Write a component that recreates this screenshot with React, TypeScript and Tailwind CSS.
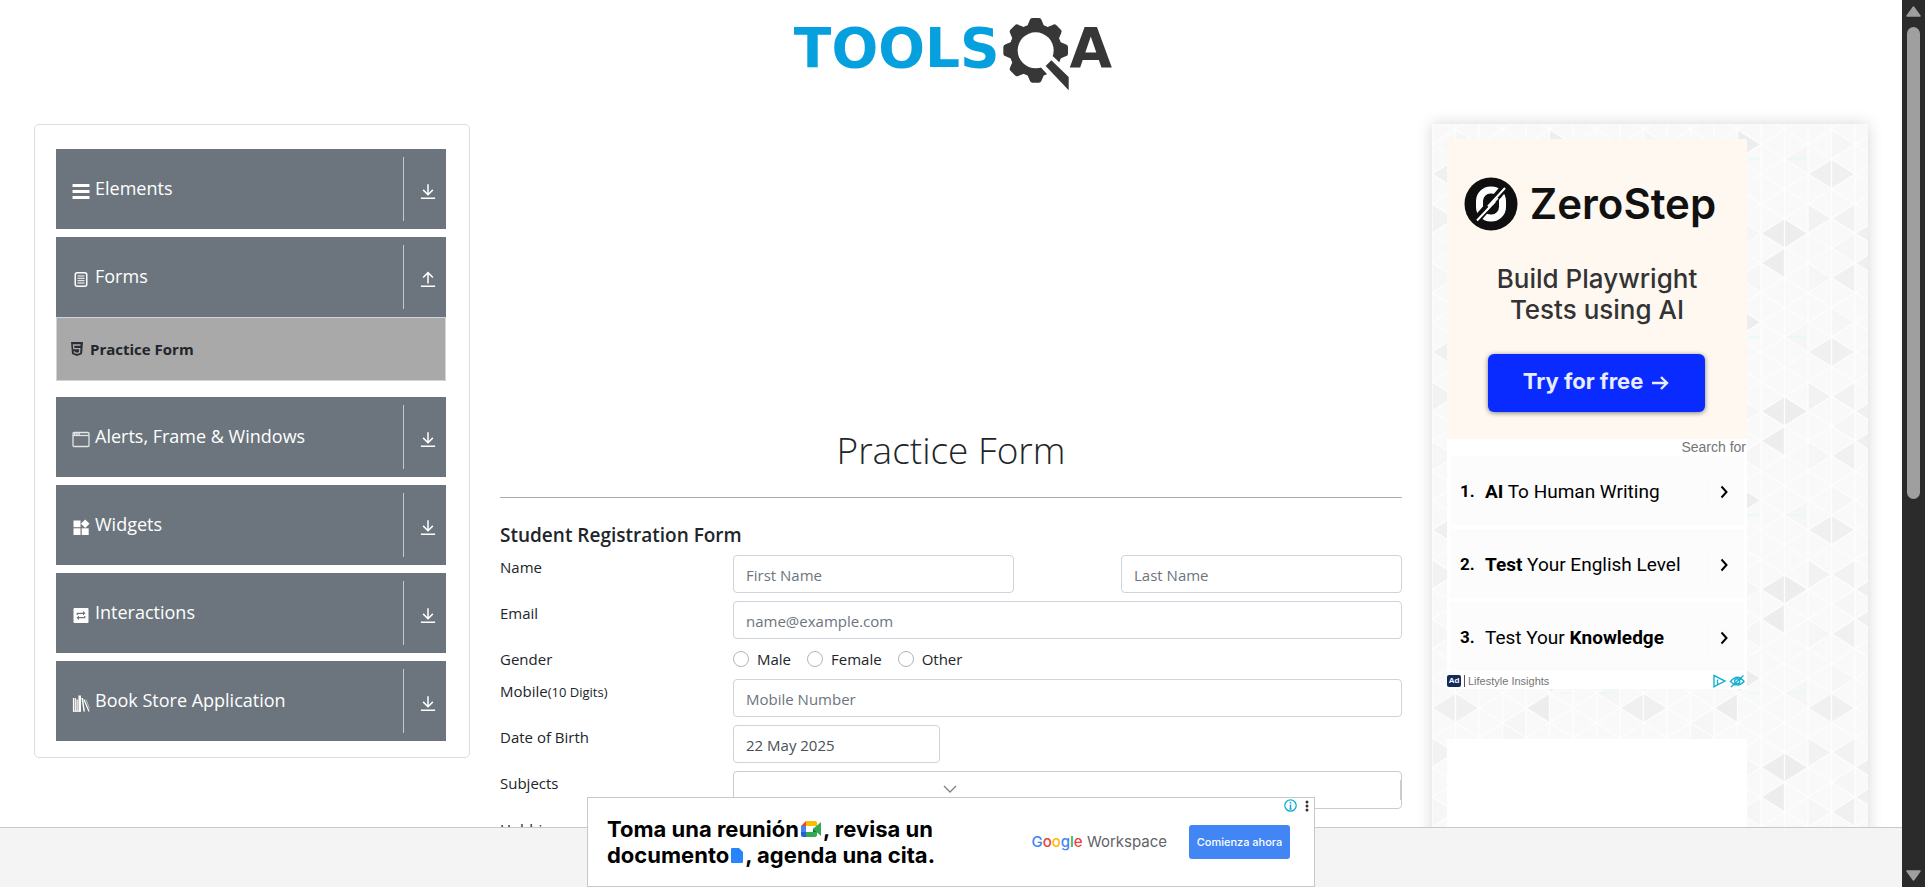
import type { ReactNode } from "react";

const DOWN = "M12 3v13M5.500 10.500L12 17l6.500-6.500M2.500 21.500h19";
const UP = "M12 18V4M5.500 10L12 3.500l6.500 6.500M2.500 21.500h19";

function ElementsIcon() {
  return (
    <svg viewBox="0 0 18 18" className="h-[18px] w-[18px]" fill="white" aria-hidden="true">
      <rect x="0.500" y="2" width="17" height="3" rx="0.500" />
      <rect x="0.500" y="8" width="17" height="3" rx="0.500" />
      <rect x="0.500" y="14" width="17" height="3" rx="0.500" />
    </svg>
  );
}

function FormsIcon() {
  return (
    <svg viewBox="0 0 18 18" className="h-[18px] w-[18px]" fill="none" stroke="white" aria-hidden="true">
      <rect x="3.250" y="2.700" width="11.500" height="13.600" rx="2" strokeWidth="1.500" />
      <path d="M5.500 6h7M5.500 8.300h7M5.500 10.700h7M5.500 13h7" strokeWidth="1" />
    </svg>
  );
}

function WindowIcon() {
  return (
    <svg viewBox="0 0 18 18" className="h-[18px] w-[18px]" fill="none" stroke="#e2e4e6" aria-hidden="true">
      <rect x="1" y="2.500" width="16" height="14" rx="1" strokeWidth="1.300" />
      <path d="M1 5.500h16" strokeWidth="1.200" />
      <path d="M2 4h6" stroke="white" strokeWidth="1.500" strokeDasharray="1.500 0.700" />
    </svg>
  );
}

function WidgetsIcon() {
  return (
    <svg viewBox="0 0 18 18" className="h-[18px] w-[18px]" fill="white" aria-hidden="true">
      <rect x="1.500" y="2.500" width="7" height="6.700" />
      <rect x="1.500" y="10.300" width="7" height="6.700" />
      <rect x="9.700" y="10.300" width="7" height="6.700" />
      <path d="M13.200 1.500l4.300 4.300-4.300 4.300-4.300-4.300z" />
    </svg>
  );
}

function InteractionsIcon() {
  return (
    <svg viewBox="0 0 18 18" className="h-[18px] w-[18px]" fill="none" aria-hidden="true">
      <rect x="1.500" y="2" width="15" height="15" rx="1" fill="white" />
      <path d="M5.300 9V7.300h6.500M12.700 10v1.700H6.200" stroke="#6c757d" strokeWidth="1.300" />
      <path d="M11 5l2.500 2.300L11 9.600zM7 9.400l-2.500 2.300L7 14z" fill="#6c757d" />
    </svg>
  );
}

function BooksIcon() {
  return (
    <svg viewBox="0 0 18 18" className="h-[18px] w-[18px]" fill="none" stroke="white" aria-hidden="true">
      <path d="M1.500 4v13.500M3.300 4v13.500" strokeWidth="1.200" />
      <path d="M5.200 5.500v12" strokeWidth="1.800" stroke="#d9dbdd" />
      <path d="M7.700 1.500v16" strokeWidth="2.500" />
      <path d="M10.200 4l2 13.500" strokeWidth="1.500" />
      <path d="M12 5.500l5 12" strokeWidth="1.200" />
      <path d="M14 5.500l3.500 9" strokeWidth="0.500" />
      <path d="M1 17.200h8" strokeWidth="1" />
    </svg>
  );
}

function Group({ icon, label, open = false }: { icon: ReactNode; label: string; open?: boolean }) {
  return (
    <button
      type="button"
      aria-expanded={open}
      className="flex h-20 w-full items-center bg-[#6c757d] py-2 pl-4 text-left text-white"
    >
      <span className="flex flex-1 items-center gap-[5px]">
        <span className="pt-1">{icon}</span>
        <span className="pb-[2px] text-lg leading-7">{label}</span>
      </span>
      <span className="flex h-16 w-[43px] items-center justify-center border-l border-[#c4c8cb] pl-[6px] pt-1">
        <svg viewBox="0 0 24 24" className="h-[18px] w-[18px]" fill="none" stroke="white" strokeWidth="2" aria-hidden="true">
          <path d={open ? UP : DOWN} />
        </svg>
      </span>
    </button>
  );
}

function Sidebar() {
  return (
    <nav className="rounded-[5px] border border-[#dcdddf] pb-4 pl-[21px] pr-[23px] pt-6">
      <div className="flex flex-col gap-2">
        <Group icon={<ElementsIcon />} label="Elements" />
        <div className="mb-2">
          <Group icon={<FormsIcon />} label="Forms" open />
          <a
            href="#practice-form"
            className="flex h-16 items-center gap-[5px] border border-[#ced4da] bg-[#a9a9a9] pl-3 text-[15px] font-bold text-[#212529]"
          >
            <svg viewBox="0 0 16 16" className="h-4 w-4" aria-hidden="true">
              <path d="M2 1h12l-1 12-5 2-5-2z" fill="#2b2e33" />
              <path d="M11.500 4h-7l.3 3.700h6l-.3 3.800-2.500.9-2.500-.9-.1-1.300" fill="none" stroke="#a9a9a9" strokeWidth="1.300" />
            </svg>
            Practice Form
          </a>
        </div>
        <Group icon={<WindowIcon />} label="Alerts, Frame &amp; Windows" />
        <Group icon={<WidgetsIcon />} label="Widgets" />
        <Group icon={<InteractionsIcon />} label="Interactions" />
        <Group icon={<BooksIcon />} label="Book Store Application" />
      </div>
    </nav>
  );
}

const FIELD =
  "h-[38px] rounded border border-[#ced4da] bg-white px-3 pt-[2px] text-[15px] text-[#495057] placeholder:text-[#6c757d]";

function Row({ label, htmlFor, children }: { label: ReactNode; htmlFor?: string; children?: ReactNode }) {
  return (
    <div className="mb-2 flex">
      <label htmlFor={htmlFor} className="w-[233px] shrink-0 leading-6">
        {label}
      </label>
      <div className="flex min-w-0 flex-1">{children}</div>
    </div>
  );
}

function PracticeForm() {
  return (
    <section id="practice-form" className="text-[15px] text-[#212529]">
      <div className="h-[302px]" />
      <h1 className="text-center text-[37px] font-light leading-[48px]">Practice Form</h1>
      <hr className="mb-[25px] mt-[23px] border-t border-[#a9abad]" />
      <form>
        <h2 className="mb-2 text-[19px] font-semibold leading-6">Student Registration Form</h2>
        <Row label="Name" htmlFor="first">
          <div className="flex flex-1 justify-between">
            <input id="first" className={`${FIELD} w-[42%]`} placeholder="First Name" />
            <input aria-label="Last Name" className={`${FIELD} w-[42%]`} placeholder="Last Name" />
          </div>
        </Row>
        <Row label="Email" htmlFor="email">
          <input id="email" className={`${FIELD} w-full`} placeholder="name@example.com" />
        </Row>
        <Row label="Gender">
          <div className="flex gap-4">
            {["Male", "Female", "Other"].map((g) => (
              <label key={g} className="flex items-center gap-2 leading-6">
                <input type="radio" name="gender" className="h-4 w-4 appearance-none rounded-full border border-[#adb5bd] bg-white" />
                {g}
              </label>
            ))}
          </div>
        </Row>
        <Row
          htmlFor="mobile"
          label={
            <>
              Mobile<span className="text-[13px]">(10 Digits)</span>
            </>
          }
        >
          <input id="mobile" className={`${FIELD} w-full`} placeholder="Mobile Number" />
        </Row>
        <Row label="Date of Birth" htmlFor="dob">
          <input id="dob" className={`${FIELD} w-[207px]`} defaultValue="22 May 2025" />
        </Row>
        <Row label="Subjects" htmlFor="subjects">
          <div className="flex h-[38px] w-full items-center rounded border border-[#ccc] bg-white">
            <input id="subjects" className="h-8 flex-1 px-3 outline-none" />
            <span className="h-5 w-px bg-[#ccc]" />
          </div>
        </Row>
        <Row label="Hobbies" />
      </form>
    </section>
  );
}

function TriangleBackdrop() {
  return (
    <svg className="absolute inset-0 h-full w-full" aria-hidden="true">
      <defs>
        <pattern id="tri" width="188" height="178" patternUnits="userSpaceOnUse">
          <rect width="188" height="178" fill="#f9f9f9" />
          <path
            fill="#f6f6f6"
            d="M23.500 5.500L47 20.300L23.500 35zM70.500 65L94 79.700L70.500 94.500zM117.500 94.500L141 109.300L117.500 124zM0 139L23.500 153.800L0 168.500zM94 50L70.500 65L94 79.700zM47 109.300L23.500 124L47 139zM188 20.300L164.500 35L188 50zM141 139L117.500 153.800L141 168.500z"
          />
          <path
            fill="#ededed"
            d="M164.500 94.500L188 109.300L164.500 124L141 109.300zM164.500 124L164.500 153.800L141 139zM117.500 5.500L141 20.300L117.500 35zM117.500 35L117.500 65L94 50z"
          />
          <path
            fill="#f0f0f0"
            d="M23.500 35L47 50L23.500 65L0 50zM70.500 94.500L70.500 124L47 109.300zM70.500 124L70.500 153.800L47 139zM47 139L47 168.500L23.500 153.800z"
          />
          <path fill="#f2f2f2" d="M0 79.700L23.500 94.500L0 109.300zM47 79.700L47 109.300L23.500 94.500z" />
          <path d="M128 35h11M168 35h18" stroke="#e0fafa" strokeWidth="1" />
          <g stroke="#fefefe" strokeWidth="1.300">
            <path d="M0 0v178M23.500 0v178M47 0v178M70.500 0v178M94 0v178M117.500 0v178M141 0v178M164.500 0v178M188 0v178" />
            {[-4, -3, -2, -1, 0, 1, 2, 3, 4, 5, 6, 7, 8].map((n) => {
              const y = 20.33 + n * 29.67;
              return <path key={n} d={`M0 ${y}L188 ${y + 118.67}M0 ${y + 29.67}L188 ${y - 89}`} />;
            })}
          </g>
        </pattern>
      </defs>
      <rect width="100%" height="100%" fill="url(#tri)" />
    </svg>
  );
}

function ZeroStepAd() {
  return (
    <div className="flex h-[300px] flex-col items-center bg-[#fef8f1] pt-[38px] font-['Inter',sans-serif]">
      <div className="flex items-center gap-3 pr-[14px]">
        <svg viewBox="0 0 54 54" className="h-[54px] w-[54px]" aria-hidden="true">
          <circle cx="27" cy="27" r="26.500" fill="#0f0f0f" />
          <rect x="15.500" y="13" width="23" height="28" rx="11" fill="none" stroke="white" strokeWidth="7" />
          <path d="M12 43.500L40.500 10.500" stroke="#0f0f0f" strokeWidth="8" />
          <path d="M13 43.500L31 24.500M24 29.500L41 11" stroke="white" strokeWidth="2" />
          <path d="M22 34L34 21" stroke="white" strokeWidth="1.500" />
        </svg>
        <span className="text-[42px] font-semibold leading-[54px] text-[#111]">ZeroStep</span>
      </div>
      <p className="mt-8 text-center text-[26px] font-medium leading-[31px] text-[#333]">
        Build Playwright
        <br />
        Tests using AI
      </p>
      <button
        type="button"
        className="mr-[2px] mt-[29px] flex h-[58px] w-[217px] items-center justify-center gap-2 rounded-md bg-[#0a2bff] pb-1 text-[22px] font-bold text-[#e8ecff] shadow-[0_1px_5px_rgba(0,0,0,0.5)]"
      >
        Try for free
        <svg viewBox="0 0 18 16" className="mt-1 h-4 w-[18px]" fill="none" stroke="#e8ecff" strokeWidth="2.400" aria-hidden="true">
          <path d="M1 8h15M10 2l6 6-6 6" />
        </svg>
      </button>
    </div>
  );
}

function SearchAd() {
  const rows: ReactNode[] = [
    <><b>AI</b> To Human Writing</>,
    <><b>Test</b> Your English Level</>,
    <>Test Your <b>Knowledge</b></>,
  ];
  return (
    <div className="flex h-[250px] flex-col bg-white">
      <p className="h-[17px] pr-px text-right font-['Liberation_Sans',sans-serif] text-sm leading-4 text-[#757575]">Search for</p>
      <div className="flex flex-col gap-1 px-[3px] font-['Roboto',sans-serif] text-black">
        {rows.map((r, i) => (
          <a key={i} href="#ad" className="flex h-[69px] items-center bg-[#fcfcfc] pl-[10px] pr-[14px] pt-[3px]">
            <span className="w-[25px] text-[17px] font-bold">{i + 1}.</span>
            <span className="flex-1 text-[19px]">{r}</span>
            <span className="flex h-[30px] items-center border-l border-[#f8f8f8] pl-[10px]">
              <svg viewBox="0 0 12 14" className="h-[14px] w-3" fill="none" stroke="black" strokeWidth="2" aria-hidden="true">
                <path d="M3.500 1.500L8.500 7l-5 5.500" />
              </svg>
            </span>
          </a>
        ))}
      </div>
      <div className="flex h-[18px] items-center pt-[2px] font-['Liberation_Sans',sans-serif] text-[#757575]">
        <span className="flex h-3 w-[14px] items-center justify-center rounded-[2px] bg-[#132b5b] text-[8px] font-bold text-white">Ad</span>
        <span className="ml-[3px] h-3 w-px bg-[#555]" />
        <span className="ml-[3px] flex-1 text-[11px]">Lifestyle Insights</span>
        <svg viewBox="0 0 32 14" className="mr-[2px] h-[14px] w-8" fill="none" stroke="#1ab1d1" strokeWidth="1.400" aria-hidden="true">
          <path d="M4.500 10.800L12 7L1 1.500V12.700L4.500 10.800V5.500" />
          <path d="M17.500 7.500q7-8.500 13.500 0q-6.500 7-13.500 0zM18 13L30.500 1.500" />
          <circle cx="24.200" cy="7.200" r="2.500" />
        </svg>
      </div>
    </div>
  );
}

function Logo() {
  return (
    <a
      href="#home"
      aria-label="Tools QA"
      className="flex h-[90px] items-start justify-center pl-1 pt-[17px] font-['DejaVu_Sans',sans-serif] text-[55px] font-bold leading-[62px]"
    >
      <span className="text-[#06a0de]">TOOLS</span>
      <svg viewBox="690 48 204 222" className="ml-[2px] h-[74px] w-[68px]" aria-hidden="true">
        <g fill="#373737">
          <circle cx="791" cy="148" r="79" />
          {[0, 45, 90, 135, 180, 225, 270, 315].map((a) => (
            <path
              key={a}
              d="M766 75L773 58Q775 51 781 51H801Q807 51 809 58L816 75z"
              transform={`rotate(${a} 791 148)`}
            />
          ))}
        </g>
        <circle cx="791" cy="148" r="54" fill="white" />
        <path d="M805 197L842 165L905 225V280H880z" fill="white" />
        <path d="M821 195L838 178L890 228V268z" fill="#373737" />
      </svg>
      <span className="text-[#373737]">A</span>
    </a>
  );
}

function WorkspaceAd() {
  return (
    <aside className="relative flex h-[90px] w-[728px] items-center border border-[#c8c8c8] bg-white font-['Inter',sans-serif]">
      <button type="button" aria-label="Collapse" className="absolute -top-[13px] left-[355px] h-2 w-[14px]">
        <svg viewBox="0 0 14 8" className="h-2 w-[14px]" fill="none" stroke="#808080" strokeWidth="1.300" aria-hidden="true">
          <path d="M1 1l6 6 6-6" />
        </svg>
      </button>
      <p className="ml-[19px] flex-1 text-[22px] font-bold leading-[26px] text-black">
        <span className="flex items-center">
          Toma una reunión
          <svg viewBox="0 0 20 16" className="mx-[2px] h-4 w-5" aria-hidden="true">
            <path d="M5 0H14Q16 0 16 2V5H5z" fill="#fbbc04" />
            <path d="M5 0V5H0z" fill="#ea4335" />
            <path d="M0 5H5V11H0z" fill="#4285f4" />
            <path d="M0 11H5V16H2Q0 16 0 14z" fill="#1967d2" />
            <path d="M5 11H16V14Q16 16 14 16H5z" fill="#34a853" />
            <path d="M16 5V11H12V8z" fill="#00832d" />
            <path d="M12 8L20 1V15z" fill="#34a853" />
          </svg>
          , revisa un
        </span>
        <span className="flex items-center">
          documento
          <svg viewBox="0 0 12 15" className="mx-[2px] h-[15px] w-3" aria-hidden="true">
            <path d="M1 0H8L12 4V14Q12 15 11 15H1Q0 15 0 14V1Q0 0 1 0z" fill="#2684fc" />
          </svg>
          , agenda una cita.
        </span>
      </p>
      <span className="text-[15px] text-[#5f6368]">
        <span className="font-medium">
          <span className="text-[#4285f4]">G</span>
          <span className="text-[#ea4335]">o</span>
          <span className="text-[#fbbc04]">o</span>
          <span className="text-[#4285f4]">g</span>
          <span className="text-[#34a853]">l</span>
          <span className="text-[#ea4335]">e</span>
        </span>{" "}
        Workspace
      </span>
      <button type="button" className="ml-[22px] mr-6 h-[34px] w-[101px] rounded-[3px] bg-[#4285f4] text-[11px] font-medium text-white">
        Comienza ahora
      </button>
      <div className="absolute right-1 top-[1px] flex items-center gap-[7px]">
        <svg viewBox="0 0 13 13" className="h-[13px] w-[13px]" fill="none" stroke="#00aecd" aria-hidden="true">
          <circle cx="6.500" cy="6.500" r="5.700" strokeWidth="1.200" />
          <path d="M6.500 3v1.500M6.500 5.500v4.500M5.500 10h2" strokeWidth="1.500" />
        </svg>
        <svg viewBox="0 0 6 12" className="h-3 w-[6px]" fill="#333" aria-hidden="true">
          <circle cx="3" cy="2" r="1.500" />
          <circle cx="3" cy="6" r="1.500" />
          <circle cx="3" cy="10" r="1.500" />
        </svg>
      </div>
    </aside>
  );
}

export default function App() {
  return (
    <div className="flex h-screen bg-white font-['Open_Sans','Noto_Sans',sans-serif]">
      <div className="flex min-w-0 flex-1 flex-col">
        <div className="min-h-0 flex-1 overflow-hidden">
          <header className="mb-[34px]">
            <Logo />
          </header>
          <main className="flex px-[19px]">
            <div className="w-1/4 px-[15px]">
              <Sidebar />
            </div>
            <div className="w-1/2 px-[15px]">
              <PracticeForm />
            </div>
            <div className="w-1/4 px-[15px]">
              <div className="relative p-[15px] shadow-[0_0_15px_rgba(0,0,0,0.16)]">
                <TriangleBackdrop />
                <div className="relative w-[300px]">
                  <ZeroStepAd />
                  <SearchAd />
                  <div className="mt-[50px] h-[250px] bg-white" />
                </div>
              </div>
            </div>
          </main>
        </div>
        <footer className="relative flex h-[60px] shrink-0 items-end justify-center border-t border-[#c8c8c8] bg-[#f4f4f4]">
          <WorkspaceAd />
        </footer>
      </div>
      <div className="flex w-[23px] shrink-0 flex-col items-center bg-[#2b2b2b] py-[6px]">
        <svg viewBox="0 0 15 11" className="h-[11px] w-[15px]" aria-hidden="true">
          <path d="M7.500 1L14 10H1z" fill="#9f9f9f" stroke="#9f9f9f" strokeWidth="1.500" strokeLinejoin="round" />
        </svg>
        <div className="mt-[10px] flex w-[13px] flex-1 flex-col">
          <div className="h-[56%] rounded-full bg-[#9f9f9f]" />
        </div>
        <svg viewBox="0 0 15 11" className="h-[11px] w-[15px]" aria-hidden="true">
          <path d="M7.500 10L14 1H1z" fill="#9f9f9f" stroke="#9f9f9f" strokeWidth="1.500" strokeLinejoin="round" />
        </svg>
      </div>
    </div>
  );
}
